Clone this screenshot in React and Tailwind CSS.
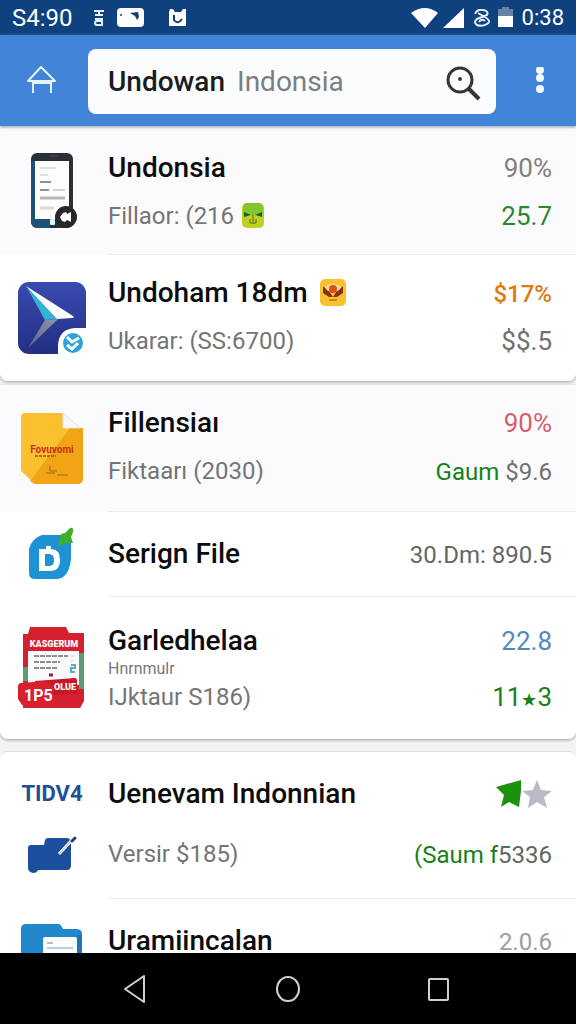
import { useState } from 'react';
import clsx from 'clsx';

function PhoneIcon() {
  return (
    <svg width="50" height="78" viewBox="0 0 50 78" aria-hidden="true">
      <rect x="4" y="1" width="42" height="75" rx="6" fill="#2b3036" />
      <path d="M4 9v60a7 7 0 0 0 7 7h12V66L8 64V9Z" fill="#1d5276" />
      <rect x="8" y="9" width="34" height="58" fill="#fdfdfe" />
      <path d="M13 16h16M13 23h8" stroke="#c3c5ca" strokeWidth="1" />
      <path d="M13 30h11M13 38h9" stroke="#8d9098" strokeWidth="2" />
      <path d="M26 38h12" stroke="#d0d2d6" strokeWidth="2" />
      <path d="M13 46h25" stroke="#b4b6bd" strokeWidth="3" />
      <path d="M13 56h14" stroke="#e0d9d6" strokeWidth="3" />
      <path d="M22 4h9" stroke="#44484d" strokeWidth="1" />
      <rect x="23" y="67" width="5" height="6" rx="1" fill="#d9f4fb" />
      <circle cx="39" cy="65" r="11" fill="#25272a" />
      <path d="M33 65 36 61 39 60 40 62 44 60V70L40 68 38 70 35 69Z" fill="#fff" />
    </svg>
  );
}

function ArrowIcon() {
  return (
    <svg width="70" height="74" viewBox="0 0 70 74" aria-hidden="true">
      <defs>
        <linearGradient id="arrowBg" x1="0" y1="0" x2="0" y2="1">
          <stop offset="0" stopColor="#3a4ab0" />
          <stop offset="1" stopColor="#232f83" />
        </linearGradient>
        <linearGradient id="arrowTail" x1="1" y1="0" x2="0" y2="1">
          <stop offset="0" stopColor="#8f95a5" />
          <stop offset="1" stopColor="#5a639c" />
        </linearGradient>
      </defs>
      <rect x="1" y="1" width="68" height="72" rx="11" fill="url(#arrowBg)" />
      <path d="M9 5 40 38 28 39Z" fill="#35b3d6" />
      <path d="M9 5 56 35Q58 37 55 37L40 38Z" fill="#fff" />
      <path d="M28 39 41 38 11 67Z" fill="url(#arrowTail)" />
      <path d="M41 74V64Q42 48 58 47H70V74Z" fill="#fff" />
      <circle cx="56" cy="62" r="10" fill="#2fa3d8" />
      <path d="M50 56l5 5 7-4M50 64l5 4 6-6" fill="none" stroke="#fff" strokeWidth="3" />
    </svg>
  );
}

function YellowFileIcon() {
  return (
    <svg width="64" height="76" viewBox="0 0 64 76" aria-hidden="true">
      <path d="M5 2H43V17H63V67Q63 73 57 73H15L1 60V6Q1 2 5 2Z" fill="#fbc02f" />
      <path d="M50 17H63V67Q63 73 57 73H15L10 70Z" fill="#f2a416" />
      <path d="M43 2 60 17H43Z" fill="#f8f8f8" stroke="#e6e2da" strokeWidth="1" />
      <text x="32" y="42" textAnchor="middle" fontFamily="Roboto, sans-serif" fontSize="10" fontWeight="700" fill="#c5301c">Fovuvomi</text>
      <path d="M15 45h21" stroke="#cf5a20" strokeWidth="2" strokeDasharray="3 1" />
      <path d="M30 55v5h7M26 62h9M37 64h11" stroke="#9a6a1c" strokeWidth="1" fill="none" />
    </svg>
  );
}

function DropIcon() {
  return (
    <svg width="50" height="56" viewBox="0 2 50 56" aria-hidden="true">
      <path d="M15 10H44V34Q42 53 30 54H8Q2 54 2 48V24Q5 13 15 10Z" fill="#1e92d4" />
      <path d="M12 24h7v-3h5v3q9 0 9 11t-10 11H12Z" fill="#fff" />
      <path d="M18 29h4q5 0 5 6t-5 6h-4Z" fill="#1e92d4" />
      <path d="M43 3Q47 2 46 7L44 12 46 18 39 18 31 21 34 9 38 8Z" fill="#3fae29" />
    </svg>
  );
}

function RedFileIcon() {
  return (
    <svg width="70" height="86" viewBox="0 0 70 86" aria-hidden="true">
      <path d="M13 2H49L52 8H67V76L63 83H6V9H11Z" fill="#d5202f" />
      <path d="M6 42H11V56H6ZM62 28H67V64H62Z" fill="#5f9b74" />
      <rect x="11" y="26" width="51" height="34" fill="#fafafa" />
      <text x="37" y="22" textAnchor="middle" fontFamily="Roboto, sans-serif" fontSize="9" fontWeight="900" fill="#fff">KASGERUM</text>
      <path d="M17 31h34M17 37h26M17 43h24" stroke="#8a8d93" strokeWidth="2" strokeDasharray="5 1" />
      <path d="M53 31h5M53 36h4" stroke="#d3d5d9" strokeWidth="1" />
      <path d="M54 40h4v3h-4v4h4" stroke="#5baec0" strokeWidth="2" fill="none" />
      <path d="M32 50h4" stroke="#8b2342" strokeWidth="3" />
      <path d="M18 56 58 53Q60 53 60 56V68L16 72Z" fill="#c81826" />
      <path d="M4 58 30 56 37 64V80H5L1 74V62Q1 58 4 58Z" fill="#d9202f" />
      <text x="37" y="65" fontFamily="Roboto, sans-serif" fontSize="9" fontWeight="900" fill="#fff">OLUE</text>
      <text x="7" y="76" fontFamily="Roboto, sans-serif" fontSize="16" fontWeight="700" fill="#fff">1P5</text>
    </svg>
  );
}

function ToolIcon() {
  return (
    <svg width="50" height="38" viewBox="0 0 50 38" aria-hidden="true">
      <path d="M18 4Q19 2 21 2H39Q44 2 44 7V29Q44 34 40 34H11Q10 37 6 37 1 36 1 32V12Q1 9 4 9H17Z" fill="#1c4f9c" />
      <path d="M32 18 45 4" stroke="#fff" strokeWidth="3" />
      <path d="M32 18 45 4" stroke="#9fb6d6" strokeWidth="1" />
      <path d="M45 5 48 2" stroke="#263f66" strokeWidth="3" strokeLinecap="round" />
    </svg>
  );
}

function FolderIcon() {
  return (
    <svg width="64" height="56" viewBox="0 0 64 56" aria-hidden="true">
      <path d="M1 6Q1 1 6 1H38Q41 1 43 6H56Q62 6 62 11V56H1Z" fill="#2388cb" />
      <path d="M57 12h5v44h-5Z" fill="#1979ba" />
      <rect x="23" y="14" width="34" height="42" rx="2" fill="#fafcfe" />
      <path d="M27 20h6" stroke="#b9bdc3" strokeWidth="2" />
      <path d="M27 25h26" stroke="#7b9cb6" strokeWidth="1" />
    </svg>
  );
}

function GreenBadge() {
  return (
    <svg width="22" height="26" viewBox="0 0 22 26" aria-hidden="true">
      <rect width="22" height="25" rx="5" fill="#c3cf1f" />
      <path d="M1 5Q1 0 6 0H16Q21 0 21 5V12H1Z" fill="#84c42c" />
      <path d="M2 9 9 12 2 14ZM20 9 13 12 20 14Z" fill="#14672c" />
      <path d="M11 12v5M8 16v4h6v-4M11 17v2" fill="none" stroke="#466f17" strokeWidth="1" />
    </svg>
  );
}

function YellowBadge() {
  return (
    <svg width="26" height="28" viewBox="0 0 26 28" aria-hidden="true">
      <rect width="26" height="27" rx="5" fill="#f6c22f" />
      <path d="M3 8Q7 6 9 12L13 18 17 12Q19 6 23 8V14L17 18H9L3 14Z" fill="#8a2f1c" />
      <path d="M4 8Q13 1 22 8L18 12H8Z" fill="#f9dc8a" />
      <circle cx="13" cy="10" r="4" fill="#d8501f" />
      <path d="M9 21h8" stroke="#8a5a1c" strokeWidth="1" />
    </svg>
  );
}

function Stars() {
  return (
    <svg width="56" height="30" viewBox="0 0 56 30" role="img" aria-label="Rating 1 of 2">
      <path d="M41 1 45 11 56 12 48 18 51 29 41 23 32 29 34 18 26 12 37 11Z" fill="#babac6" />
      <path d="M0 8 25 1 25 12 23 28 13 23 5 28 8 16Z" fill="#1c920c" />
    </svg>
  );
}

const groups = [
  {
    id: 'recent',
    className: 'rounded-b-lg shadow-[0_1px_3px_#9a9ca1]',
    rows: [
      { id: 1, icon: PhoneIcon, title: 'Undonsia', sub: 'Fillaor: (216', subBadge: GreenBadge, tinted: true, pad: 'pt-6 pb-5', gap: 'gap-3',
        top: [['90%', 'text-[#808080]']], bottom: [['25.7', 'text-[#2c862f]']] },
      { id: 2, icon: ArrowIcon, title: 'Undoham 18dm', titleBadge: YellowBadge, sub: 'Ukarar: (SS:6700)', pad: 'pt-5 pb-[22px]', gap: 'gap-3',
        top: [['$17%', 'text-2xl font-medium text-[#df7a12]']], bottom: [['$$.5', 'text-[#707070]']] },
    ],
  },
  {
    id: 'files',
    className: 'rounded-b-lg shadow-[0_1px_3px_#9a9ca1]',
    rows: [
      { id: 3, icon: YellowFileIcon, title: 'Fillensiaı', sub: 'Fiktaarı (2030)', tinted: true, pad: 'pt-5 pb-[22px]', gap: 'gap-3',
        top: [['90%', 'text-[#d4606e]']], bottom: [['Gaum', 'text-2xl text-[#168118]'], [' $9.6', 'text-2xl text-[#707070]']] },
      { id: 4, icon: DropIcon, title: 'Serign File', pad: 'py-6', gap: 'gap-0',
        top: [['30.Dm: 890.5', 'text-2xl text-[#666666]']] },
      { id: 5, icon: RedFileIcon, title: 'Garledhelaa', note: 'Hnrnmulr', sub: 'IJktaur S186)', pad: 'pt-[26px] pb-6', gap: 'gap-0',
        top: [['22.8', 'text-[#5488bf]']], bottom: [['11', 'text-[#168118]'], ['★', 'text-lg text-[#168118]'], ['3', 'text-[#168118]']] },
    ],
  },
  {
    id: 'versions',
    className: 'rounded-t-lg border-t border-[#dcdde0]',
    rows: [
      { id: 6, title: 'Uenevam Indonnian', sub: 'Versir $185)', pad: 'pt-6 pb-[26px]', gap: 'gap-6', brand: 'TIDV4', icon: ToolIcon,
        top: [], stars: true, bottom: [['(Saum f', 'text-2xl text-[#168118]'], ['5336', 'text-2xl text-[#5f665f]']] },
      { id: 7, icon: FolderIcon, title: 'Uramiincalan', pad: 'pt-6 pb-6', gap: 'gap-0', cut: true,
        top: [['2.0.6', 'text-2xl text-[#9c9ca6]']] },
    ],
  },
];

function Amount({ parts }) {
  return (
    <span className="shrink-0 whitespace-pre">
      {parts.map(([text, style]) => <span key={text} className={style}>{text}</span>)}
    </span>
  );
}

function Row({ row, last }) {
  const Icon = row.icon;
  const TitleBadge = row.titleBadge;
  const SubBadge = row.subBadge;
  return (
    <li className={clsx('flex', row.tinted ? 'bg-[#fbfbfd]' : 'bg-white')}>
      <div className={clsx('flex w-[104px] shrink-0 flex-col items-center', row.brand ? 'gap-6 pt-6' : row.cut ? 'pt-6' : 'justify-center')}>
        {row.brand && <span className="text-[22px] leading-9 font-bold text-[#1f4f94]">{row.brand}</span>}
        <Icon />
      </div>
      <div className={clsx('ml-1 flex min-w-0 flex-1 flex-col pr-6', row.pad, row.gap, !last && 'border-b border-[#ededf0]')}>
        <div className="flex h-9 items-center justify-between text-[26px] leading-9">
          <h2 className="flex items-center gap-3 text-[28px] font-medium whitespace-nowrap text-[#0c0c0c]">
            {row.title}{TitleBadge && <TitleBadge />}
          </h2>
          {row.stars ? <Stars /> : <Amount parts={row.top} />}
        </div>
        {row.note && <p className="text-base leading-5 text-[#777777]">{row.note}</p>}
        {row.sub && (
          <div className="flex h-9 items-center justify-between text-[26px] leading-9">
            <p className="flex items-center gap-2 text-2xl leading-9 whitespace-nowrap text-[#757575]">
              {row.sub}{SubBadge && <SubBadge />}
            </p>
            <Amount parts={row.bottom} />
          </div>
        )}
      </div>
    </li>
  );
}

function StatusBar() {
  return (
    <div className="flex h-[35px] shrink-0 items-center justify-between bg-[#10417f] px-3 text-white">
      <div className="flex items-center">
        <span className="text-2xl leading-8">S4:90</span>
        <svg className="ml-5" width="12" height="18" viewBox="0 0 12 18" fill="none" stroke="#e6eefa" strokeWidth="2" aria-hidden="true">
          <path d="M1 2h10M6 2v4M2 6h8M2 10h8M9 10v5M10 16H3q-2-2 0-4h6" />
        </svg>
        <svg className="ml-3" width="28" height="20" viewBox="0 0 28 20" aria-hidden="true">
          <rect width="27" height="19" rx="4" fill="#fff" />
          <path d="M13 5 21 4 22 9 20 12 18 8Z" fill="#163c70" />
          <circle cx="4" cy="7" r="1" fill="#163c70" />
        </svg>
        <svg className="ml-6" width="18" height="18" viewBox="0 0 18 18" aria-hidden="true">
          <path d="M1 0H4L6 3H12L14 0H17V17H0V3Z" fill="#fff" />
          <path d="M5 6v5q4 5 8-1" fill="none" stroke="#123d74" strokeWidth="2" />
        </svg>
      </div>
      <div className="flex items-center">
        <svg width="28" height="20" viewBox="0 0 28 20" aria-hidden="true">
          <path d="M0 5Q14-5 27 5L14 20Z" fill="#fff" />
        </svg>
        <svg className="ml-1" width="22" height="20" viewBox="0 0 22 20" aria-hidden="true">
          <path d="M21 0V20H0Z" fill="#fff" />
        </svg>
        <svg className="ml-2" width="17" height="18" viewBox="0 0 17 18" fill="none" stroke="#e6eefa" strokeWidth="2" aria-hidden="true">
          <path d="M2 5Q4 0 10 1T14 6L4 10Q0 13 4 16 9 18 14 15T12 8L5 4M6 13q3-4 6-1" />
        </svg>
        <svg className="ml-2" width="16" height="21" viewBox="0 0 16 21" aria-hidden="true">
          <path d="M4 0H11V2H15V9H0V2H4Z" fill="#6681a6" />
          <path d="M0 9H15V20H0Z" fill="#fff" />
        </svg>
        <span className="ml-2 text-[22px] leading-8">0:38</span>
      </div>
    </div>
  );
}

export default function App() {
  const [query, setQuery] = useState('Undowan');

  return (
    <div className="flex h-screen flex-col overflow-hidden bg-[#f1f2f4] font-[Roboto,sans-serif]">
      <StatusBar />

      <header className="z-10 flex shrink-0 items-center bg-[#4284d8] pt-[14px] pr-6 pb-3 pl-6 shadow-[0_1px_3px_#8c96a8]">
        <button type="button" aria-label="Home" className="shrink-0">
          <svg width="36" height="34" viewBox="0 3 36 34" fill="none" stroke="#e3f4ff" strokeWidth="2" strokeLinejoin="round" aria-hidden="true">
            <path d="M17 5 4 19H31ZM9 19V31M27 19V31M4 19H8L9 21H27L28 19" />
          </svg>
        </button>
        <form className="ml-7 flex h-[65px] min-w-0 flex-1 items-center justify-between rounded-lg bg-[#fbfcfd] pr-3.5 pl-5" onSubmit={e => e.preventDefault()}>
          <label className="flex items-center gap-3 text-[28px] leading-9 text-[#7c7f82]">
            <input value={query} onChange={e => setQuery(e.target.value)} aria-label="Search"
              className="field-sizing-content font-medium text-[#1c1c1c] outline-none" />
            Indonsia
          </label>
          <button type="submit" aria-label="Search" className="shrink-0">
            <svg width="40" height="40" viewBox="0 0 40 40" fill="none" stroke="#363636" aria-hidden="true">
              <circle cx="18" cy="18" r="12" strokeWidth="3" />
              <path d="M27 27 37 37" strokeWidth="4" />
              <circle cx="18" cy="17" r="2" fill="#363636" stroke="none" />
            </svg>
          </button>
        </form>
        <button type="button" aria-label="More options" className="ml-8 shrink-0">
          <svg width="24" height="30" viewBox="0 3 24 30" fill="#f1faff" aria-hidden="true">
            <circle cx="12" cy="6" r="4" />
            <circle cx="12" cy="14" r="4" />
            <circle cx="12" cy="25" r="4" />
          </svg>
        </button>
      </header>

      <main className="min-h-0 flex-1 overflow-hidden">
        <div className="flex flex-col gap-1">
          {groups.map(g => (
            <ul key={g.id} className={clsx('overflow-hidden', g.className, g.id === 'versions' && 'mt-2')}>
              {g.rows.map((row, i) => <Row key={row.id} row={row} last={i === g.rows.length - 1} />)}
            </ul>
          ))}
        </div>
      </main>

      <nav className="flex h-[71px] shrink-0 items-center justify-center gap-32 bg-black">
        <button type="button" aria-label="Back">
          <svg width="24" height="28" viewBox="0 0 24 28" fill="none" stroke="#d2d0ce" strokeWidth="2" strokeLinejoin="round" aria-hidden="true">
            <path d="M20 1V27L1 14Z" />
          </svg>
        </button>
        <button type="button" aria-label="Home screen">
          <svg width="24" height="28" viewBox="0 0 24 28" fill="none" stroke="#d2d0ce" strokeWidth="2" aria-hidden="true">
            <ellipse cx="12" cy="14" rx="11" ry="12" />
          </svg>
        </button>
        <button type="button" aria-label="Recent apps">
          <svg width="24" height="28" viewBox="1 0 24 28" fill="none" stroke="#d2d0ce" strokeWidth="2" aria-hidden="true">
            <rect x="2" y="4" width="19" height="21" rx="1" />
          </svg>
        </button>
      </nav>
    </div>
  );
}
